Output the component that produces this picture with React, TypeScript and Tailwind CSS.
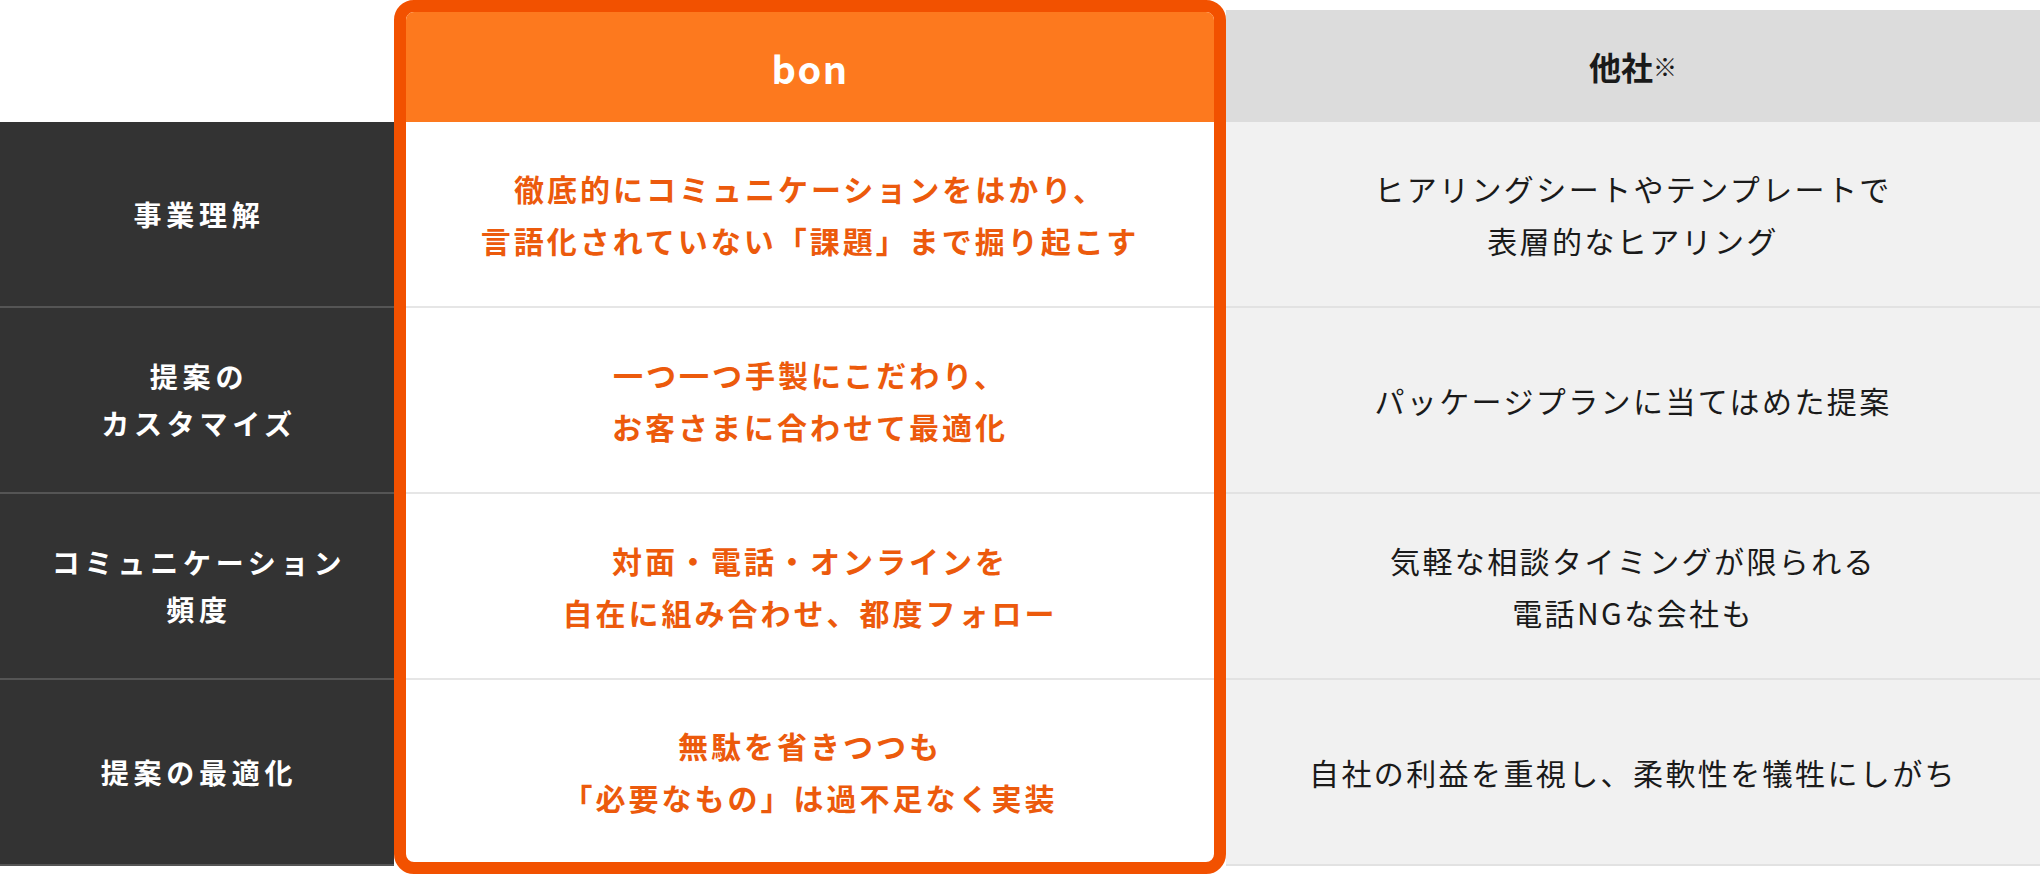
import React from "react";

const font = { fontFamily: '"Noto Sans CJK JP", "Noto Sans", sans-serif' };

const labels: string[][] = [
  ["事業理解"],
  ["提案の", "カスタマイズ"],
  ["コミュニケーション", "頻度"],
  ["提案の最適化"],
];

const bon: string[][] = [
  ["徹底的にコミュニケーションをはかり、", "言語化されていない「課題」まで掘り起こす"],
  ["一つ一つ手製にこだわり、", "お客さまに合わせて最適化"],
  ["対面・電話・オンラインを", "自在に組み合わせ、都度フォロー"],
  ["無駄を省きつつも", "「必要なもの」は過不足なく実装"],
];

const other: string[][] = [
  ["ヒアリングシートやテンプレートで", "表層的なヒアリング"],
  ["パッケージプランに当てはめた提案"],
  ["気軽な相談タイミングが限られる", "電話NGな会社も"],
  ["自社の利益を重視し、柔軟性を犠牲にしがち"],
];

function Lines({ lines }: { lines: string[] }) {
  return (
    <>
      {lines.map((l, i) => (
        <div key={i}>{l}</div>
      ))}
    </>
  );
}

export default function App() {
  return (
    <div className="flex h-[876px] w-[2040px] bg-white" style={font}>
      {/* Left label column */}
      <div className="flex w-[394px] flex-col">
        <div className="h-[122px]" />
        {labels.map((l, i) => (
          <div
            key={i}
            className="flex h-[186px] flex-col items-center justify-center border-b-2 border-[#555555] bg-[#333333] pl-[4px] text-center text-[28px] font-bold leading-[47px] tracking-[0.17em] text-white"
          >
            <Lines lines={l} />
          </div>
        ))}
      </div>

      {/* bon column */}
      <div className="flex h-[874px] w-[832px] flex-col overflow-hidden rounded-[20px] border-[12px] border-[#f25100] bg-white">
        <div className="flex h-[110px] items-center justify-center bg-[#fd791e] text-[38px] font-bold tracking-[0.04em] text-white">
          bon
        </div>
        {bon.map((l, i) => (
          <div
            key={i}
            className={
              i < 3
                ? "flex h-[186px] flex-col items-center justify-center border-b-2 border-[#e6e6e6] text-center text-[30px] font-bold leading-[52px] tracking-[0.1em] text-[#ec5a0c]"
                : "flex flex-1 flex-col items-center justify-center text-center text-[30px] font-bold leading-[52px] tracking-[0.1em] text-[#ec5a0c]"
            }
          >
            <Lines lines={l} />
          </div>
        ))}
      </div>

      {/* other column */}
      <div className="flex flex-1 flex-col">
        <div className="h-[10px]" />
        <div className="flex h-[112px] items-center justify-center bg-[#dcdcdc] text-[32px] font-bold text-[#1a1a1a]">
          他社<span className="text-[24px] font-normal">※</span>
        </div>
        {other.map((l, i) => (
          <div
            key={i}
            className="flex h-[186px] flex-col items-center justify-center border-b-2 border-[#e2e2e2] bg-[#f1f1f1] text-center text-[30px] font-normal leading-[52px] tracking-[0.08em] text-[#1a1a1a]"
          >
            <Lines lines={l} />
          </div>
        ))}
      </div>
    </div>
  );
}
